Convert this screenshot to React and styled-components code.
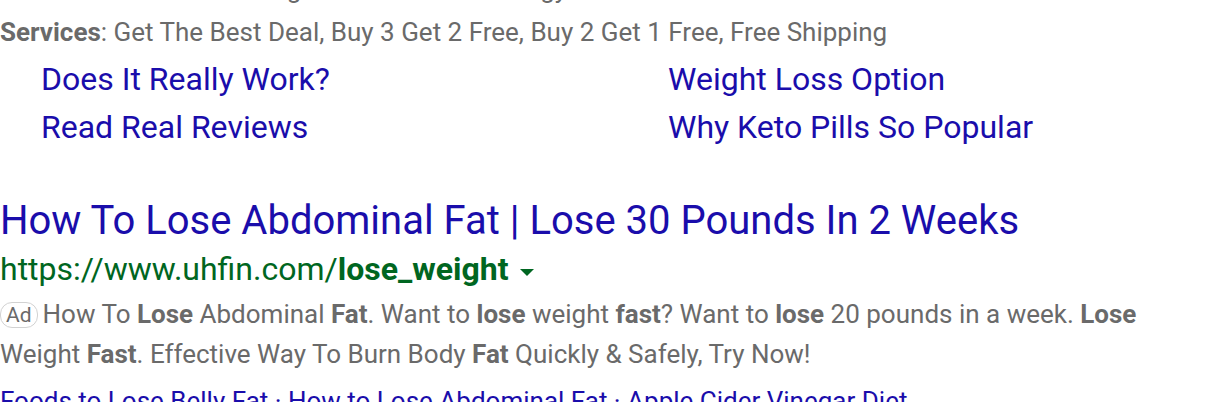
import styled, { createGlobalStyle } from "styled-components"

const Global = createGlobalStyle`
  html, body {
    margin: 0;
    padding: 0;
    background: #fff;
    overflow: hidden;
  }
  body {
    font-family: Roboto, "Liberation Sans", Arial, sans-serif;
  }
`

const Page = styled.div`
  width: 1216px;
  height: 402px;
  overflow: hidden;
`

const Result = styled.div`
  margin-top: -31px;
`

const Snippet = styled.div`
  font-size: 26px;
  line-height: 40px;
  color: #6a6a6a;
  white-space: nowrap;
  b {
    font-weight: 700;
  }
`

const CutLine = styled(Snippet)`
  margin-bottom: 3px;
`

const Sitelinks = styled.div`
  display: grid;
  grid-template-columns: 627px 1fr;
  padding-left: 41px;
  margin-top: 3px;
`

const Sitelink = styled.a`
  font-size: 32px;
  line-height: 48px;
  color: #1a0dab;
  text-decoration: none;
  white-space: nowrap;
`

const Ad = styled.div`
  margin-top: 45px;
`

const Title = styled.a`
  display: block;
  font-size: 40px;
  line-height: 50px;
  color: #1a0dab;
  text-decoration: none;
  white-space: nowrap;
`

const Url = styled.div`
  display: flex;
  align-items: center;
  margin-top: 1px;
  font-size: 32px;
  line-height: 44px;
  color: #006621;
  white-space: nowrap;
  b {
    font-weight: 700;
  }
`

const Caret = styled.span`
  width: 0;
  height: 0;
  margin-left: 12px;
  margin-top: 6px;
  border-left: 7px solid transparent;
  border-right: 7px solid transparent;
  border-top: 7px solid #006621;
`

const Badge = styled.span`
  display: inline-block;
  font-size: 21px;
  line-height: 24px;
  padding: 0 5px;
  margin-right: 5px;
  border: 1.5px solid #d2d2d2;
  border-radius: 12px;
  color: #6a6a6a;
  vertical-align: 1px;
`

const Desc = styled(Snippet)`
  margin-top: 3px;
`

const Links = styled.div`
  font-size: 26px;
  line-height: 40px;
  color: #1a0dab;
  white-space: nowrap;
  margin-top: 7px;
`

export default function App() {
  return (
    <Page>
      <Global />
      <Result>
        <CutLine>
          Natural Formula · Pure Ingredients · Boost Energy · Made in USA · Safe & Fast Results · Trusted
        </CutLine>
        <Snippet>
          <b>Services</b>: Get The Best Deal, Buy 3 Get 2 Free, Buy 2 Get 1 Free, Free Shipping
        </Snippet>
        <Sitelinks>
          <Sitelink href="#">Does It Really Work?</Sitelink>
          <Sitelink href="#">Weight Loss Option</Sitelink>
          <Sitelink href="#">Read Real Reviews</Sitelink>
          <Sitelink href="#">Why Keto Pills So Popular</Sitelink>
        </Sitelinks>
      </Result>
      <Ad>
        <Title href="#">How To Lose Abdominal Fat | Lose 30 Pounds In 2 Weeks</Title>
        <Url>
          https://www.uhfin.com/<b>lose_weight</b>
          <Caret />
        </Url>
        <Desc>
          <Badge>Ad</Badge>How To <b>Lose</b> Abdominal <b>Fat</b>. Want to <b>lose</b> weight <b>fast</b>? Want to <b>lose</b> 20 pounds in a week. <b>Lose</b>
          <br />
          Weight <b>Fast</b>. Effective Way To Burn Body <b>Fat</b> Quickly &amp; Safely, Try Now!
        </Desc>
        <Links>
          Foods to Lose Belly Fat · How to Lose Abdominal Fat · Apple Cider Vinegar Diet
        </Links>
      </Ad>
    </Page>
  )
}
